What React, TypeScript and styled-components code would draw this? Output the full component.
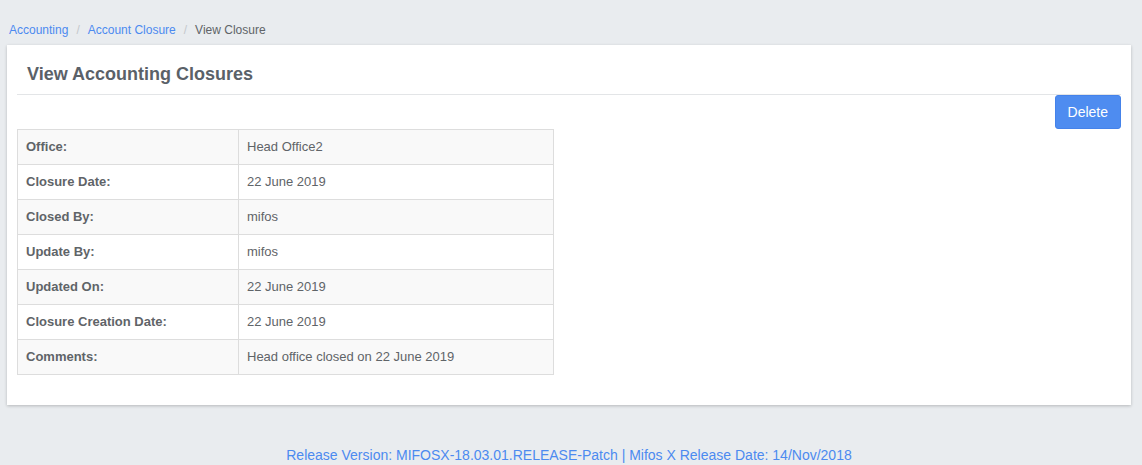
import styled, { createGlobalStyle } from 'styled-components';

const GlobalStyle = createGlobalStyle`
  html, body {
    margin: 0;
    padding: 0;
    background: #e9ecef;
    font-family: "Liberation Sans", Arial, sans-serif;
  }
`;

const rows: [string, string][] = [
  ['Office:', 'Head Office2'],
  ['Closure Date:', '22 June 2019'],
  ['Closed By:', 'mifos'],
  ['Update By:', 'mifos'],
  ['Updated On:', '22 June 2019'],
  ['Closure Creation Date:', '22 June 2019'],
  ['Comments:', 'Head office closed on 22 June 2019'],
];

function App() {
  return (
    <Page>
      <GlobalStyle />
      <Breadcrumb>
        <Crumb href="#">Accounting</Crumb>
        <Sep>/</Sep>
        <Crumb href="#">Account Closure</Crumb>
        <Sep>/</Sep>
        <Current>View Closure</Current>
      </Breadcrumb>
      <Card>
        <Title>View Accounting Closures</Title>
        <Rule />
        <Actions>
          <DeleteBtn>Delete</DeleteBtn>
        </Actions>
        <InfoTable>
          <tbody>
            {rows.map(([label, value], i) => (
              <Row key={label} $striped={i % 2 === 0}>
                <Label>{label}</Label>
                <Value>{value}</Value>
              </Row>
            ))}
          </tbody>
        </InfoTable>
      </Card>
      <Footer>Release Version: MIFOSX-18.03.01.RELEASE-Patch | Mifos X Release Date: 14/Nov/2018</Footer>
    </Page>
  );
}
export default App;

const Page = styled.div`
  padding: 0 11px 0 7px;
  min-height: 465px;
  box-sizing: border-box;
`;

const Breadcrumb = styled.div`
  display: flex;
  align-items: center;
  height: 45px;
  padding: 15px 0 0 2px;
  box-sizing: border-box;
  font-size: 12px;
`;

const Crumb = styled.a`
  color: #4c8af0;
  text-decoration: none;
`;

const Sep = styled.span`
  color: #c4c8cc;
  padding: 0 8px;
`;

const Current = styled.span`
  color: #5f6468;
`;

const Card = styled.div`
  background: #fff;
  padding: 0 10px 30px;
  box-shadow: 0 1px 3px rgba(0, 0, 0, 0.22);
  display: flow-root;
`;

const Title = styled.h3`
  margin: 0;
  padding: 19px 10px 10px;
  line-height: 20px;
  font-size: 18px;
  font-weight: 700;
  color: #5a6168;
`;

const Rule = styled.hr`
  margin: 0;
  border: none;
  border-top: 1px solid #e3e5e7;
`;

const Actions = styled.div`
  display: flex;
  justify-content: flex-end;
`;

const DeleteBtn = styled.button`
  height: 34px;
  padding: 0 12px;
  font-family: inherit;
  font-size: 14px;
  color: #fff;
  background: #4e8cf0;
  border: 1px solid #4482ea;
  border-radius: 3px;
  cursor: pointer;
`;

const InfoTable = styled.table`
  width: 537px;
  border-collapse: collapse;
  font-size: 13px;
`;

const Row = styled.tr<{ $striped: boolean }>`
  height: 35px;
  background: ${p => (p.$striped ? '#f9f9f9' : '#fff')};
  td {
    border: 1px solid #dddddd;
    padding: 0 8px 1px;
  }
`;

const Label = styled.td`
  width: 204px;
  font-weight: 700;
  color: #5f6468;
`;

const Value = styled.td`
  color: #5f6468;
`;

const Footer = styled.div`
  text-align: center;
  padding-top: 42px;
  font-size: 14px;
  color: #4c8af0;
`;
